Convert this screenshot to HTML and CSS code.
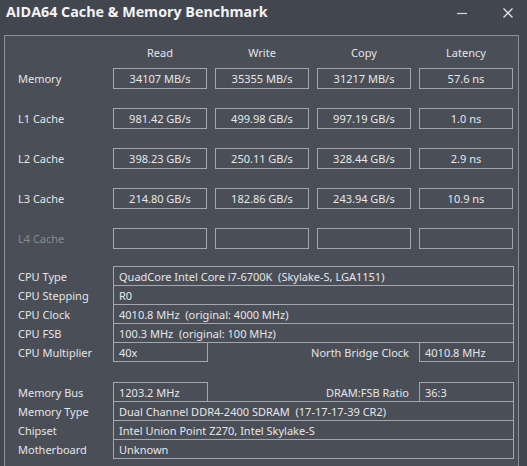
FILE: index.html
```html
<!DOCTYPE html>
<html>
<head>
<meta charset="utf-8">
<link rel="stylesheet" href="styles.css">
</head>
<body>
<div class="window">
  <div class="titlebar">
    <div class="title">AIDA64 Cache &amp; Memory Benchmark</div>
    <div class="controls">
      <span class="ctl min">
        <svg width="12" height="12" viewBox="0 0 12 12"><path d="M1 6.5H11" stroke="#d8d9dc" stroke-width="1.2"/></svg>
      </span>
      <span class="ctl close">
        <svg width="12" height="12" viewBox="0 0 12 12"><path d="M1.5 1.5L10.5 10.5M10.5 1.5L1.5 10.5" stroke="#e4e5e8" stroke-width="1.3"/></svg>
      </span>
    </div>
  </div>
  <div class="panel">
    <div class="heads">
      <div></div>
      <div class="colhead">Read</div>
      <div class="colhead">Write</div>
      <div class="colhead">Copy</div>
      <div class="colhead">Latency</div>
    </div>
    <div class="bench">
      <div class="lbl">Memory</div>
      <div class="val">34107 MB/s</div>
      <div class="val">35355 MB/s</div>
      <div class="val">31217 MB/s</div>
      <div class="val">57.6 ns</div>

      <div class="lbl">L1 Cache</div>
      <div class="val">981.42 GB/s</div>
      <div class="val">499.98 GB/s</div>
      <div class="val">997.19 GB/s</div>
      <div class="val">1.0 ns</div>

      <div class="lbl">L2 Cache</div>
      <div class="val">398.23 GB/s</div>
      <div class="val">250.11 GB/s</div>
      <div class="val">328.44 GB/s</div>
      <div class="val">2.9 ns</div>

      <div class="lbl">L3 Cache</div>
      <div class="val">214.80 GB/s</div>
      <div class="val">182.86 GB/s</div>
      <div class="val">243.94 GB/s</div>
      <div class="val">10.9 ns</div>

      <div class="lbl dim">L4 Cache</div>
      <div class="val"></div>
      <div class="val"></div>
      <div class="val"></div>
      <div class="val"></div>
    </div>

    <div class="info cpu">
      <div class="row"><div class="ilbl">CPU Type</div><div class="box wide">QuadCore Intel Core i7-6700K&nbsp; (Skylake-S, LGA1151)</div></div>
      <div class="row"><div class="ilbl">CPU Stepping</div><div class="box wide">R0</div></div>
      <div class="row"><div class="ilbl">CPU Clock</div><div class="box wide">4010.8 MHz&nbsp; (original: 4000 MHz)</div></div>
      <div class="row"><div class="ilbl">CPU FSB</div><div class="box wide">100.3 MHz&nbsp; (original: 100 MHz)</div></div>
      <div class="row"><div class="ilbl">CPU Multiplier</div><div class="box narrow">40x</div><div class="rlbl">North Bridge Clock</div><div class="box narrow">4010.8 MHz</div></div>
    </div>

    <div class="info mem">
      <div class="row"><div class="ilbl">Memory Bus</div><div class="box narrow">1203.2 MHz</div><div class="rlbl">DRAM:FSB Ratio</div><div class="box narrow">36:3</div></div>
      <div class="row"><div class="ilbl">Memory Type</div><div class="box wide">Dual Channel DDR4-2400 SDRAM&nbsp; (17-17-17-39 CR2)</div></div>
      <div class="row"><div class="ilbl">Chipset</div><div class="box wide">Intel Union Point Z270, Intel Skylake-S</div></div>
      <div class="row"><div class="ilbl">Motherboard</div><div class="box wide">Unknown</div></div>
    </div>
  </div>
</div>
</body>
</html>
```

FILE: styles.css
```css
* { box-sizing: border-box; }
html, body { margin: 0; padding: 0; }
body {
  width: 527px;
  height: 466px;
  overflow: hidden;
  background: #42464e;
  font-family: "Noto Sans", "Open Sans", sans-serif;
  font-size: 11px;
  color: #e2e3e5;
}
.window { width: 527px; height: 466px; }
.titlebar {
  height: 35px;
  display: flex;
  align-items: flex-start;
  justify-content: space-between;
  padding: 2px 0 0 6px;
}
.title {
  font-family: "Open Sans", "Noto Sans", sans-serif;
  font-weight: 700;
  font-size: 14.3px;
  line-height: 20px;
  color: #f2f3f5;
}
.controls { display: flex; align-items: center; height: 20px; padding-top: 1px; }
.ctl { display: flex; width: 12px; height: 12px; }
.min { margin-right: 34px; }
.close { margin-right: 13px; }
.panel {
  margin: 0 8px 0 4px;
  height: 440px;
  border: 1px solid #8b8f96;
  border-bottom: none;
  background: #4a4e57;
  padding-left: 13px;
}
.heads,
.bench {
  display: grid;
  grid-template-columns: 87px repeat(4, 94px);
  column-gap: 8px;
}
.heads { height: 32px; }
.bench {
  grid-template-rows: repeat(5, 21px);
  row-gap: 19px;
}
.colhead {
  text-align: center;
  padding-top: 9px;
  line-height: 16px;
  color: #e4e5e7;
}
.lbl {
  display: flex;
  align-items: center;
  color: #e4e5e7;
}
.lbl.dim { color: #878b92; }
.val {
  border: 1px solid #a3a6ac;
  display: flex;
  align-items: center;
  justify-content: center;
  color: #e6e7e9;
}
.info { display: flex; flex-direction: column; width: 496px; }
.cpu { margin-top: 17px; }
.mem { margin-top: 20px; }
.row { display: flex; height: 20px; }
.row + .row { margin-top: -1px; }
.ilbl {
  width: 95px;
  display: flex;
  align-items: center;
  color: #e4e5e7;
}
.box {
  border: 1px solid #a3a6ac;
  display: flex;
  align-items: center;
  padding-left: 5px;
  white-space: pre;
  color: #e6e7e9;
}
.wide { width: 401px; }
.narrow { width: 95px; }
.rlbl {
  flex: 1;
  display: flex;
  align-items: center;
  justify-content: flex-end;
  padding-right: 10px;
  color: #e4e5e7;
}
```
